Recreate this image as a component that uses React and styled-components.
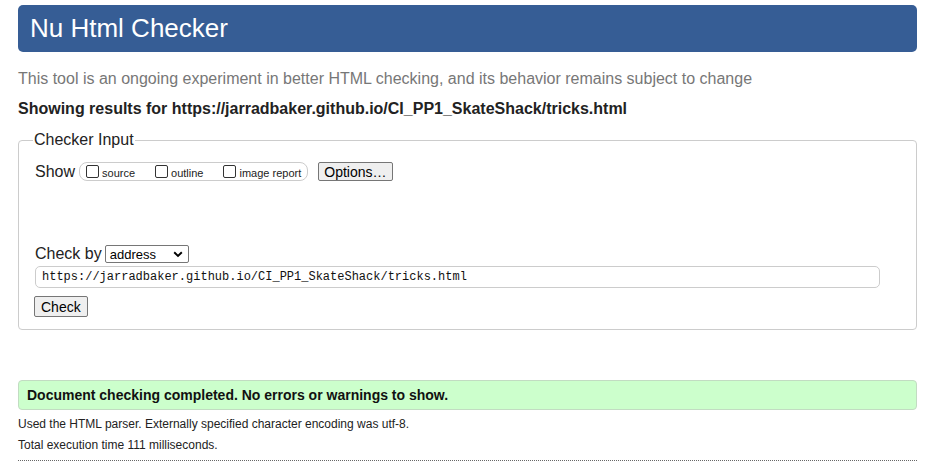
import React from 'react';
import styled, { createGlobalStyle } from 'styled-components';

const GlobalStyle = createGlobalStyle`
  html, body {
    margin: 0;
    padding: 0;
    background: #ffffff;
  }
  body {
    font-family: "Liberation Sans", Arial, sans-serif;
    color: #222;
  }
`;

const Page = styled.div`
  padding: 5px 17px 0 18px;
`;

const Banner = styled.header`
  height: 47px;
  display: flex;
  align-items: center;
  padding-left: 12px;
  background-color: #365d95;
  border-radius: 5px;
`;

const Title = styled.h1`
  margin: 0;
  color: #fff;
  font-size: 26px;
  font-weight: normal;
`;

const Intro = styled.p`
  margin: 17px 0 0;
  color: #777;
  font-size: 16px;
  line-height: 20px;
`;

const ResultsFor = styled.h2`
  margin: 10px 0 0;
  font-size: 16px;
  font-weight: bold;
  line-height: 20px;
  color: #222;
`;

const Fieldset = styled.fieldset`
  margin: 12px 0 0;
  padding: 13px 15px 12px 16px;
  border: 1px solid #ccc;
  border-radius: 4px;
`;

const Legend = styled.legend`
  font-size: 16px;
  padding: 0 1px;
  margin-left: -2px;
  color: #222;
`;

const Row = styled.div`
  display: flex;
  align-items: center;
  margin-top: ${p => p.$top || 0}px;
`;

const RowLabel = styled.span`
  font-size: 16px;
  color: #222;
  margin-right: ${p => p.$space || 0}px;
`;

const OptionGroup = styled.div`
  display: flex;
  align-items: center;
  height: 19px;
  box-sizing: border-box;
  padding: 0 6px 0 6px;
  border: 1px solid #ccc;
  border-radius: 8px;
  gap: 20px;
`;

const CheckLabel = styled.label`
  display: flex;
  align-items: center;
  font-size: 11px;
  color: #222;
  padding-top: 2px;
`;

const Box = styled.span`
  width: 13px;
  height: 13px;
  box-sizing: border-box;
  border: 1px solid #333;
  border-radius: 2px;
  margin: 0 3px 3px 0;
  background: #fff;
`;

const Button = styled.button`
  font-family: "Liberation Sans", Arial, sans-serif;
  font-size: 14px;
  height: ${p => p.$h || 19}px;
  padding: 0 ${p => p.$px || 6}px;
  color: #000;
  background: #efefef;
  border: 1px solid #767676;
  border-radius: 2px;
  margin-left: ${p => p.$ml || 0}px;
`;

const Select = styled.div`
  display: flex;
  align-items: center;
  justify-content: space-between;
  width: 84px;
  height: 18px;
  box-sizing: border-box;
  padding: 0 5px 0 4px;
  border: 1px solid #767676;
  border-radius: 2px;
  font-size: 13px;
  color: #000;
`;

const UrlInput = styled.div`
  margin-top: 3px;
  width: 845px;
  height: 22px;
  box-sizing: border-box;
  display: flex;
  align-items: center;
  padding-left: 6px;
  border: 1px solid #ccc;
  border-radius: 5px;
  font-family: "Liberation Mono", "DejaVu Sans Mono", monospace;
  font-size: 12px;
  color: #111;
`;

const Success = styled.div`
  margin-top: 50px;
  height: 30px;
  box-sizing: border-box;
  display: flex;
  align-items: center;
  padding-left: 8px;
  background: #ccffcc;
  border: 1px solid #c2dcc2;
  border-radius: 4px;
  font-size: 14px;
  font-weight: bold;
  color: #111;
`;

const Detail = styled.p`
  margin: ${p => p.$top || 0}px 0 0;
  font-size: 12px;
  line-height: 14px;
  color: #222;
`;

const Rule = styled.hr`
  margin: 8px 0 0;
  border: 0;
  border-top: 1px dotted #666;
`;

const Chevron = () => (
  <svg width="10" height="7" viewBox="0 0 10 7">
    <path d="M1.2 1.3 L5 5 L8.8 1.3" fill="none" stroke="#000" strokeWidth="1.9" />
  </svg>
);

function App() {
  return (
    <>
      <GlobalStyle />
      <Page>
        <Banner>
          <Title>Nu Html Checker</Title>
        </Banner>
        <Intro>
          This tool is an ongoing experiment in better HTML checking, and its behavior remains subject to change
        </Intro>
        <ResultsFor>Showing results for https://jarradbaker.github.io/CI_PP1_SkateShack/tricks.html</ResultsFor>
        <Fieldset>
          <Legend>Checker Input</Legend>
          <Row>
            <RowLabel $space={4}>Show</RowLabel>
            <OptionGroup>
              <CheckLabel><Box />source</CheckLabel>
              <CheckLabel><Box />outline</CheckLabel>
              <CheckLabel><Box />image report</CheckLabel>
            </OptionGroup>
            <Button $ml={10} $px={5}>Options…</Button>
          </Row>
          <Row $top={64}>
            <RowLabel $space={3}>Check by</RowLabel>
            <Select>
              <span>address</span>
              <Chevron />
            </Select>
          </Row>
          <UrlInput>https://jarradbaker.github.io/CI_PP1_SkateShack/tricks.html</UrlInput>
          <Row $top={8}>
            <Button $h={21} $px={6} $ml={-1}>Check</Button>
          </Row>
        </Fieldset>
        <Success>Document checking completed. No errors or warnings to show.</Success>
        <Detail $top={7}>Used the HTML parser. Externally specified character encoding was utf-8.</Detail>
        <Detail $top={7}>Total execution time 111 milliseconds.</Detail>
        <Rule />
      </Page>
    </>
  );
}

export default App;
